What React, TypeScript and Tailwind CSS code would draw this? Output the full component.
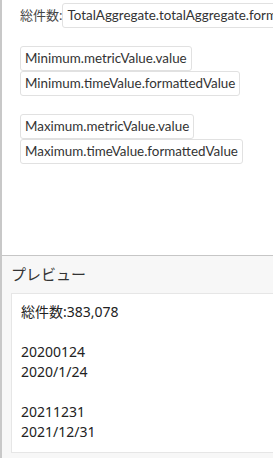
import React from "react";

const chip =
  "inline-flex items-center h-[25px] px-[4px] border border-[#e1e1e1] rounded-[3px] bg-white text-[13.4px] text-[#333] whitespace-nowrap";

export default function App() {
  return (
    <div
      className="w-[273px] h-[458px] flex flex-col border-l-2 border-[#c8c8c8] overflow-hidden"
      style={{ fontFamily: "Lato, 'Noto Sans CJK JP', sans-serif" }}
    >
      <div className="h-[255px] bg-white pl-[18px] pt-[3px] flex flex-col shrink-0">
        <div className="flex items-center whitespace-nowrap">
          <span className="text-[13px] text-[#444]" style={{ fontFamily: "'Noto Sans', 'Noto Sans CJK JP', sans-serif" }}>
            総件数:
          </span>
          <span className={chip}>TotalAggregate.totalAggregate.formattedValue</span>
        </div>
        <div className="flex flex-col items-start mt-[18px]">
          <span className={chip}>Minimum.metricValue.value</span>
          <span className={chip}>Minimum.timeValue.formattedValue</span>
        </div>
        <div className="flex flex-col items-start mt-[18px]">
          <span className={chip}>Maximum.metricValue.value</span>
          <span className={chip}>Maximum.timeValue.formattedValue</span>
        </div>
      </div>
      <div className="flex-1 bg-[#f7f7f7] border-t border-[#c6c6c6] pl-[9px] flex flex-col">
        <div
          className="text-[15px] text-[#333] h-[37px] flex items-center"
          style={{ fontFamily: "'Noto Sans CJK JP', sans-serif" }}
        >
          プレビュー
        </div>
        <div
          className="bg-white border border-[#e6e6e6] border-r-0 h-[160px] pl-[9px] pt-[8px] text-[14px] leading-[20px] text-[#222]"
          style={{ fontFamily: "'Noto Sans', 'Noto Sans CJK JP', sans-serif" }}
        >
          <div>総件数:383,078</div>
          <div>&nbsp;</div>
          <div>20200124</div>
          <div>2020/1/24</div>
          <div>&nbsp;</div>
          <div>20211231</div>
          <div>2021/12/31</div>
        </div>
      </div>
    </div>
  );
}
